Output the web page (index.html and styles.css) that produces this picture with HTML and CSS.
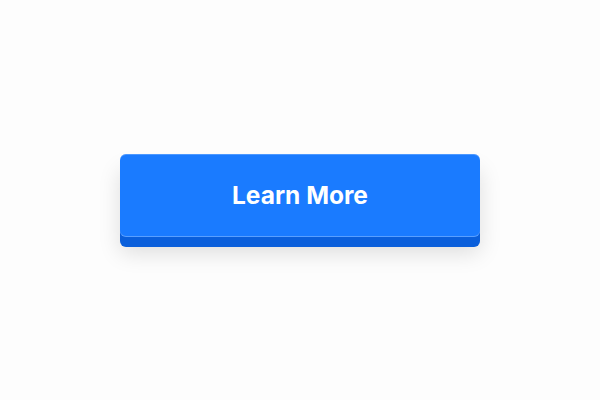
FILE: index.html
```html
<!DOCTYPE html>
<html>
<head>
<meta charset="utf-8">
<link rel="stylesheet" href="styles.css">
</head>
<body>
<main class="stage">
  <button class="cta">Learn More</button>
</main>
</body>
</html>
```
FILE: styles.css
```css
html, body {
  margin: 0;
  padding: 0;
  background: #fdfdfd;
}
.stage {
  width: 600px;
  height: 400px;
  display: flex;
  align-items: center;
  justify-content: center;
}
.cta {
  width: 360px;
  height: 83px;
  margin-bottom: 10px;
  box-sizing: border-box;
  border: none;
  border-radius: 6px;
  background: #1a7bff;
  color: #ffffff;
  font-family: Inter, "Noto Sans", sans-serif;
  font-weight: 700;
  font-size: 24.5px;
  letter-spacing: 0;
  padding: 0;
  box-shadow:
    inset 0 1px 0 rgba(255,255,255,0.22),
    inset 0 -1px 0 rgba(255,255,255,0.28),
    0 10px 0 #0a5fdb,
    0 16px 22px rgba(0,0,0,0.13);
}
```
